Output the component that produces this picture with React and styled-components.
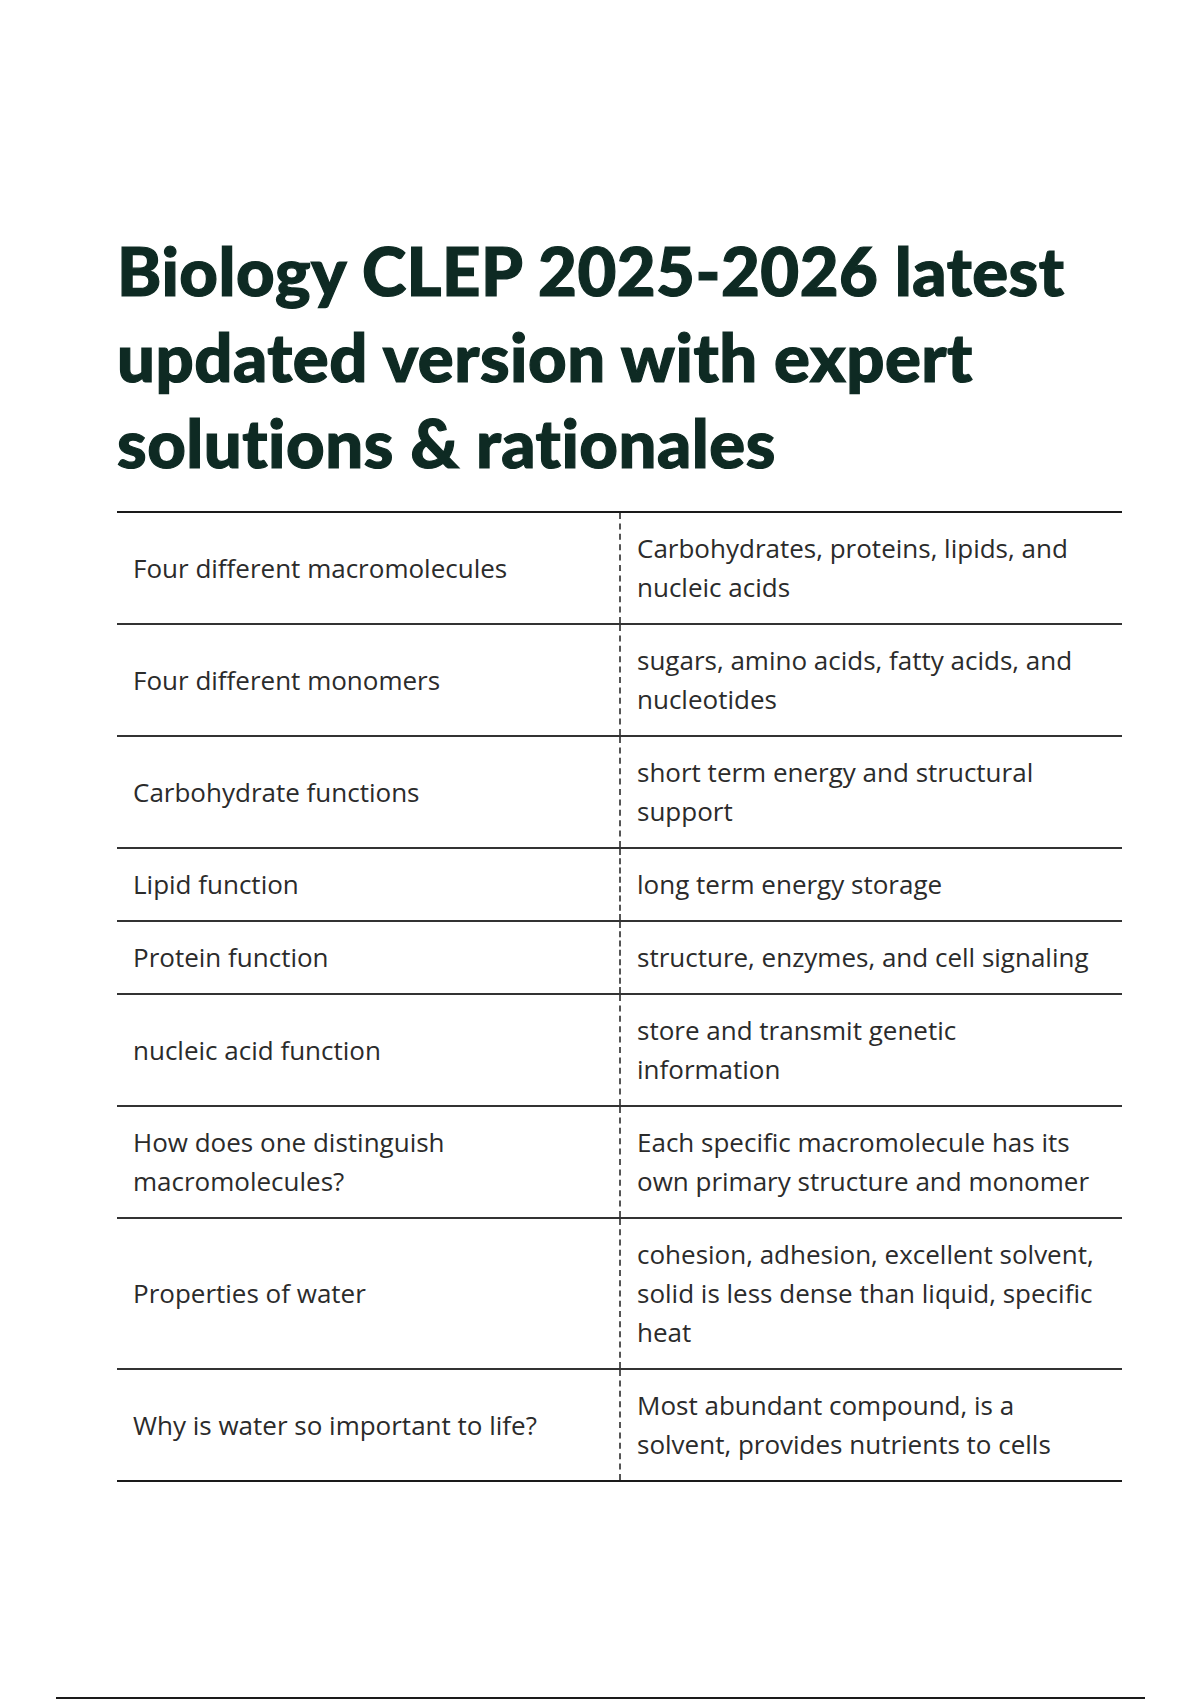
import React from 'react';
import styled, { createGlobalStyle } from 'styled-components';

const GlobalStyle = createGlobalStyle`
  html, body {
    margin: 0;
    padding: 0;
    background: #fff;
  }
  body {
    font-family: "Open Sans", "Noto Sans", sans-serif;
  }
`;

const Page = styled.div`
  width: 1200px;
  height: 1700px;
  box-sizing: border-box;
  padding: 227px 78px 0 117px;
  display: flex;
  flex-direction: column;
  position: relative;
`;

const Title = styled.h1`
  margin: 0 0 26px;
  font-family: "Lato", "Noto Sans", sans-serif;
  font-weight: 900;
  font-size: 67px;
  line-height: 86px;
  color: #0e2a23;
  letter-spacing: 0.5px;
  -webkit-text-stroke: 1.2px #0e2a23;
`;

const Table = styled.div`
  display: flex;
  flex-direction: column;
  border-top: 2px solid #1a1a1a;
`;

const Row = styled.div`
  display: grid;
  grid-template-columns: 502px 1fr;
  border-bottom: 2px solid ${p => (p.$last ? '#1a1a1a' : '#333')};
`;

const Cell = styled.div`
  display: flex;
  align-items: center;
  padding: ${p => (p.$answer ? '16px 22px 16px 16px' : '16px')};
  font-size: 26px;
  line-height: 39px;
  color: #2b2b2b;
  border-left: ${p => (p.$answer ? '2px dashed #555' : 'none')};
`;

const Footer = styled.div`
  position: absolute;
  left: 56px;
  right: 55px;
  bottom: 1px;
  border-top: 2px solid #1a1a1a;
`;

const rows = [
  ['Four different macromolecules', 'Carbohydrates, proteins, lipids, and nucleic acids'],
  ['Four different monomers', 'sugars, amino acids, fatty acids, and nucleotides'],
  ['Carbohydrate functions', 'short term energy and structural support'],
  ['Lipid function', 'long term energy storage'],
  ['Protein function', 'structure, enzymes, and cell signaling'],
  ['nucleic acid function', 'store and transmit genetic information'],
  ['How does one distinguish macromolecules?', 'Each specific macromolecule has its own primary structure and monomer'],
  ['Properties of water', 'cohesion, adhesion, excellent solvent, solid is less dense than liquid, specific heat'],
  ['Why is water so important to life?', 'Most abundant compound, is a solvent, provides nutrients to cells'],
];

export default function App() {
  return (
    <>
      <GlobalStyle />
      <Page>
        <Title>
          Biology CLEP 2025-2026 latest updated version with expert solutions &amp; rationales
        </Title>
        <Table>
          {rows.map(([term, def], i) => (
            <Row key={term} $last={i === rows.length - 1}>
              <Cell>{term}</Cell>
              <Cell $answer>{def}</Cell>
            </Row>
          ))}
        </Table>
        <Footer />
      </Page>
    </>
  );
}
